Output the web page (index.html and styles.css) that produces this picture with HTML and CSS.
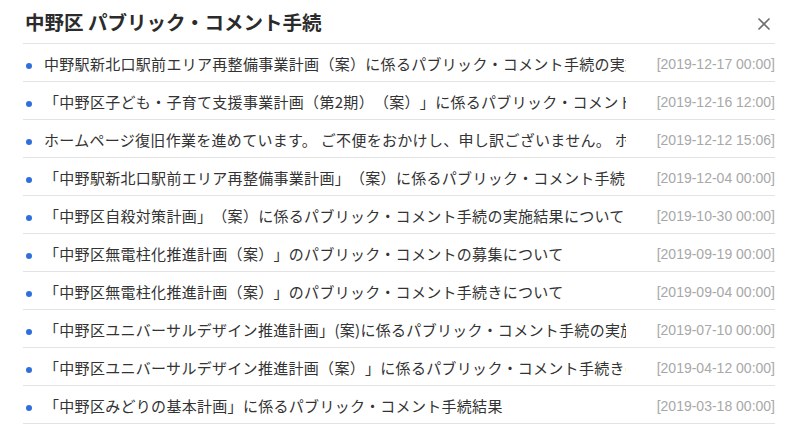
FILE: index.html
```html
<!DOCTYPE html>
<html lang="ja">
<head>
<meta charset="utf-8">
<title>中野区 パブリック・コメント手続</title>
<link rel="stylesheet" href="styles.css">
</head>
<body>
<div class="panel">
  <div class="header">
    <h1 class="title">中野区 パブリック・コメント手続</h1>
    <button class="close" aria-label="閉じる">
      <svg width="14" height="14" viewBox="0 0 14 14"><path d="M1.5 1.5 L12.5 12.5 M12.5 1.5 L1.5 12.5" stroke="#6f6f6f" stroke-width="1.6" fill="none"/></svg>
    </button>
  </div>
  <ul class="list">
    <li class="item"><span class="dot"></span><span class="text">中野駅新北口駅前エリア再整備事業計画（案）に係るパブリック・コメント手続の実施結果について</span><span class="date">[2019-12-17 00:00]</span></li>
    <li class="item"><span class="dot"></span><span class="text">「中野区子ども・子育て支援事業計画（第2期）（案）」に係るパブリック・コメント手続の実施について</span><span class="date">[2019-12-16 12:00]</span></li>
    <li class="item"><span class="dot"></span><span class="text">ホームページ復旧作業を進めています。 ご不便をおかけし、申し訳ございません。 ホームページ</span><span class="date">[2019-12-12 15:06]</span></li>
    <li class="item"><span class="dot"></span><span class="text">「中野駅新北口駅前エリア再整備事業計画」（案）に係るパブリック・コメント手続について</span><span class="date">[2019-12-04 00:00]</span></li>
    <li class="item"><span class="dot"></span><span class="text">「中野区自殺対策計画」（案）に係るパブリック・コメント手続の実施結果について</span><span class="date">[2019-10-30 00:00]</span></li>
    <li class="item"><span class="dot"></span><span class="text">「中野区無電柱化推進計画（案）」のパブリック・コメントの募集について</span><span class="date">[2019-09-19 00:00]</span></li>
    <li class="item"><span class="dot"></span><span class="text">「中野区無電柱化推進計画（案）」のパブリック・コメント手続きについて</span><span class="date">[2019-09-04 00:00]</span></li>
    <li class="item"><span class="dot"></span><span class="text">「中野区ユニバーサルデザイン推進計画」(案)に係るパブリック・コメント手続の実施結果について</span><span class="date">[2019-07-10 00:00]</span></li>
    <li class="item"><span class="dot"></span><span class="text">「中野区ユニバーサルデザイン推進計画（案）」に係るパブリック・コメント手続きの実施について</span><span class="date">[2019-04-12 00:00]</span></li>
    <li class="item"><span class="dot"></span><span class="text">「中野区みどりの基本計画」に係るパブリック・コメント手続結果</span><span class="date">[2019-03-18 00:00]</span></li>
  </ul>
</div>
</body>
</html>
```
FILE: styles.css
```css
html, body {
  margin: 0;
  padding: 0;
  background: #ffffff;
}
body {
  font-family: "Noto Sans CJK JP", "Noto Sans", sans-serif;
  color: #333333;
  text-spacing-trim: space-all;
}
.panel {
  width: 752px;
  margin-left: 23px;
}
.header {
  height: 43px;
  display: flex;
  align-items: center;
  justify-content: space-between;
  border-bottom: 1px solid #e3e3e3;
}
.title {
  margin: 0 0 0 2px;
  font-size: 19.5px;
  font-weight: 700;
  color: #2b2b2b;
  line-height: 1;
}
.close {
  background: none;
  border: 0;
  padding: 0;
  margin-right: 4px;
  width: 14px;
  height: 14px;
  display: flex;
  position: relative;
  top: 2px;
}
.list {
  list-style: none;
  margin: 0;
  padding: 0;
}
.item {
  height: 37px;
  display: flex;
  align-items: center;
  border-bottom: 1px solid #e3e3e3;
  padding-left: 3px;
}
.dot {
  flex: none;
  width: 6px;
  height: 6px;
  border-radius: 50%;
  background: #2f6fdc;
  margin-right: 12px;
  position: relative;
  top: 3px;
}
.text {
  flex: none;
  width: 582px;
  overflow: hidden;
  white-space: nowrap;
  font-size: 15px;
  letter-spacing: 0.3px;
  color: #333333;
  position: relative;
  top: 1px;
}
.date {
  flex: 1;
  text-align: right;
  white-space: nowrap;
  font-family: "Liberation Sans", Arial, sans-serif;
  font-size: 14px;
  color: #a8a8a8;
  position: relative;
  top: 1px;
}
```
